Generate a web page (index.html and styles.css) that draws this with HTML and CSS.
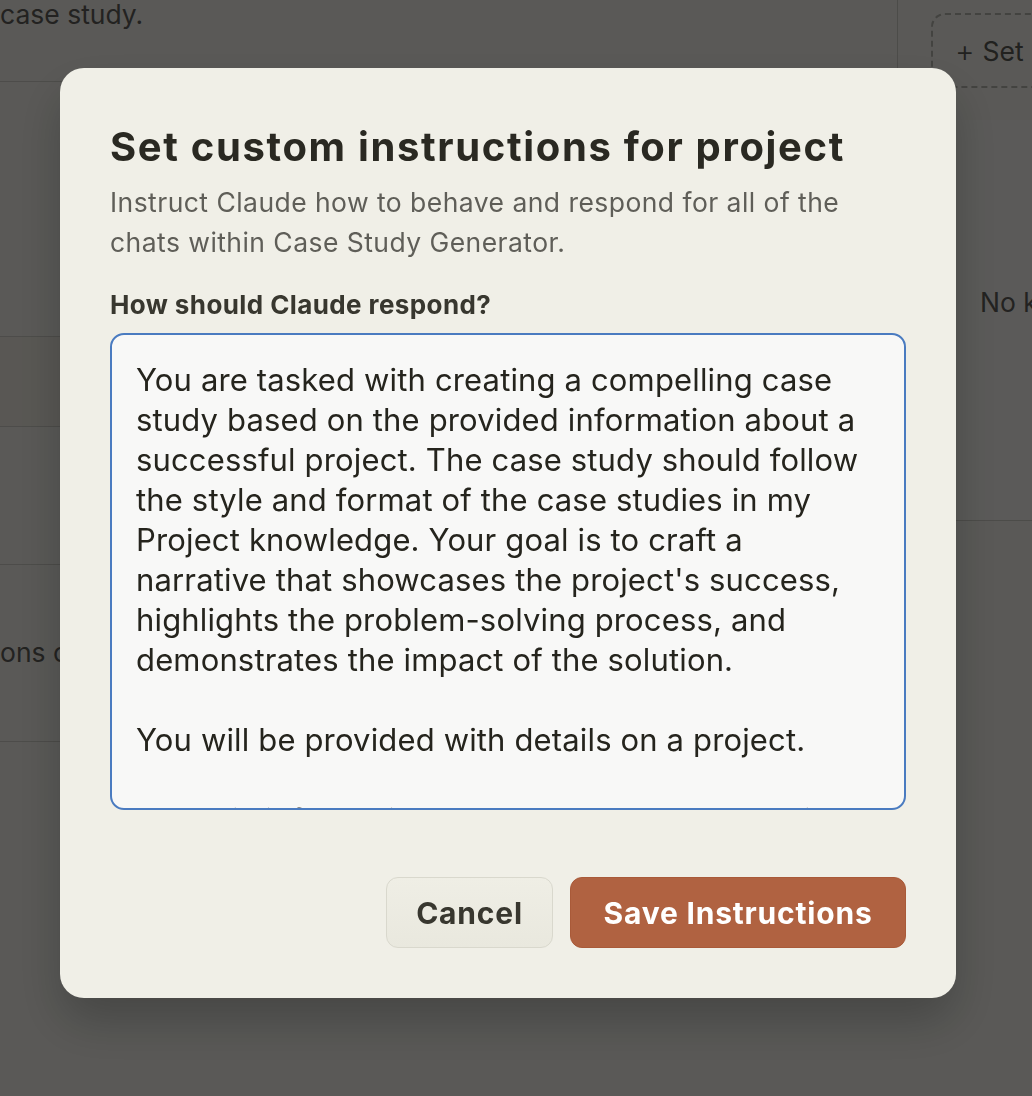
FILE: index.html
```html
<!DOCTYPE html>
<html lang="en">
<head>
<meta charset="utf-8">
<title>Set custom instructions for project</title>
<link rel="stylesheet" href="styles.css">
</head>
<body>
<div class="page">
  <main class="main">
    <div class="main-top"><p class="bg-text">case study.</p></div>
    <div class="row row-a"></div>
    <div class="row row-b"></div>
    <div class="row row-c"></div>
    <div class="row row-d"><p class="bg-text">ons of</p></div>
    <div class="row row-e"></div>
  </main>
  <aside class="side">
    <div class="side-top">
      <div class="dashed"><span class="plus">+</span> Set</div>
    </div>
    <div class="side-panel"><p class="bg-text">No k</p></div>
    <div class="side-rest"></div>
  </aside>
</div>

<div class="overlay"></div>

<div class="modal" role="dialog" aria-labelledby="dlg-title">
  <h2 id="dlg-title" class="title">Set custom instructions for project</h2>
  <p class="subtitle">Instruct Claude how to behave and respond for all of the<br>chats within Case Study Generator.</p>
  <label class="label">How should Claude respond?</label>
  <div class="textarea">
    <div class="ta-inner">You are tasked with creating a compelling case
study based on the provided information about a
successful project. The case study should follow
the style and format of the case studies in my
Project knowledge. Your goal is to craft a
narrative that showcases the project's success,
highlights the problem-solving process, and
demonstrates the impact of the solution.

You will be provided with details on a project.

Use this information to create a case study with</div>
  </div>
  <div class="actions">
    <button class="btn btn-cancel">Cancel</button>
    <button class="btn btn-save">Save Instructions</button>
  </div>
</div>
</body>
</html>
```

FILE: styles.css
```css
* { box-sizing: border-box; }
html, body { margin: 0; padding: 0; }
body {
  width: 1032px;
  height: 1096px;
  overflow: hidden;
  background: #f3f2ec;
  font-family: Inter, "Noto Sans", sans-serif;
  color: #3d3d3a;
}

/* background page */
.page {
  display: grid;
  grid-template-columns: 897px 1fr;
  height: 1096px;
}
.main { display: flex; flex-direction: column; }
.bg-text {
  margin: 0;
  font-size: 26.5px;
  line-height: 30px;
  color: #5f5e59;
  white-space: nowrap;
  overflow: hidden;
}
.main-top {
  height: 82px;
  border-bottom: 1px solid #d0cfc8;
}
.main-top .bg-text { margin-top: -1px; }
.row { border-bottom: 1px solid #d0cfc8; }
.row-a { height: 255px; }
.row-b { height: 90px; background: #f0ede4; }
.row-c { height: 138px; }
.row-d { height: 177px; padding-top: 72px; }
.row-e { flex: 1; border-bottom: none; }

.side { display: flex; flex-direction: column; }
.side-top {
  height: 120px;
  border-left: 1px solid #cfcec7;
  padding: 13px 0 0 33px;
  overflow: hidden;
}
.dashed {
  width: 240px;
  height: 75px;
  border: 2px dashed #b6b5ae;
  border-radius: 14px;
  padding: 0 0 0 22px;
  display: flex;
  align-items: center;
  gap: 8px;
  font-size: 26.5px;
  color: #5a5955;
  white-space: nowrap;
}
.plus { font-size: 30px; font-weight: 300; }
.side-panel {
  height: 401px;
  background: #f6f5f0;
  border-bottom: 1px solid #cfcec7;
  padding: 167px 0 0 83px;
  overflow: hidden;
}
.side-rest { flex: 1; }

.overlay {
  position: fixed;
  inset: 0;
  background: rgba(0, 0, 0, 0.63);
}

/* modal */
.modal {
  position: fixed;
  left: 60px;
  top: 68px;
  width: 896px;
  height: 930px;
  background: #f0efe7;
  border-radius: 24px;
  box-shadow: 0 24px 48px rgba(0, 0, 0, 0.22);
  padding: 54px 50px 50px;
  display: flex;
  flex-direction: column;
}
.title {
  margin: 0;
  font-size: 40px;
  line-height: 50px;
  font-weight: 700;
  color: #2a2922;
  letter-spacing: 1.65px;
}
.subtitle {
  margin: 10px 0 0;
  font-size: 26.5px;
  line-height: 40px;
  color: #5f5e58;
  letter-spacing: 0.45px;
}
.label {
  display: block;
  margin-top: 27px;
  font-size: 26px;
  line-height: 32px;
  font-weight: 700;
  color: #38372f;
  letter-spacing: 0.4px;
}
.textarea {
  margin-top: 12px;
  height: 477px;
  border: 2px solid #4a7bc0;
  border-radius: 14px;
  background: #f8f8f7;
  overflow: hidden;
  padding: 25px 24px 0;
}
.ta-inner {
  white-space: pre;
  font-size: 31px;
  line-height: 40px;
  color: #25241d;
  letter-spacing: 0.15px;
}
.actions {
  margin-top: auto;
  display: flex;
  justify-content: flex-end;
  gap: 17px;
}
.btn {
  height: 71px;
  border-radius: 12px;
  font-family: inherit;
  font-size: 30px;
  font-weight: 700;
  padding: 0;
  letter-spacing: 0.8px;
  cursor: pointer;
}
.btn-cancel {
  width: 167px;
  background: linear-gradient(#efeee5, #e9e8de);
  border: 1px solid #d9d8cd;
  color: #38372f;
}
.btn-save {
  width: 336px;
  background: #b06241;
  border: 1px solid #a95a39;
  color: #ffffff;
}
```
